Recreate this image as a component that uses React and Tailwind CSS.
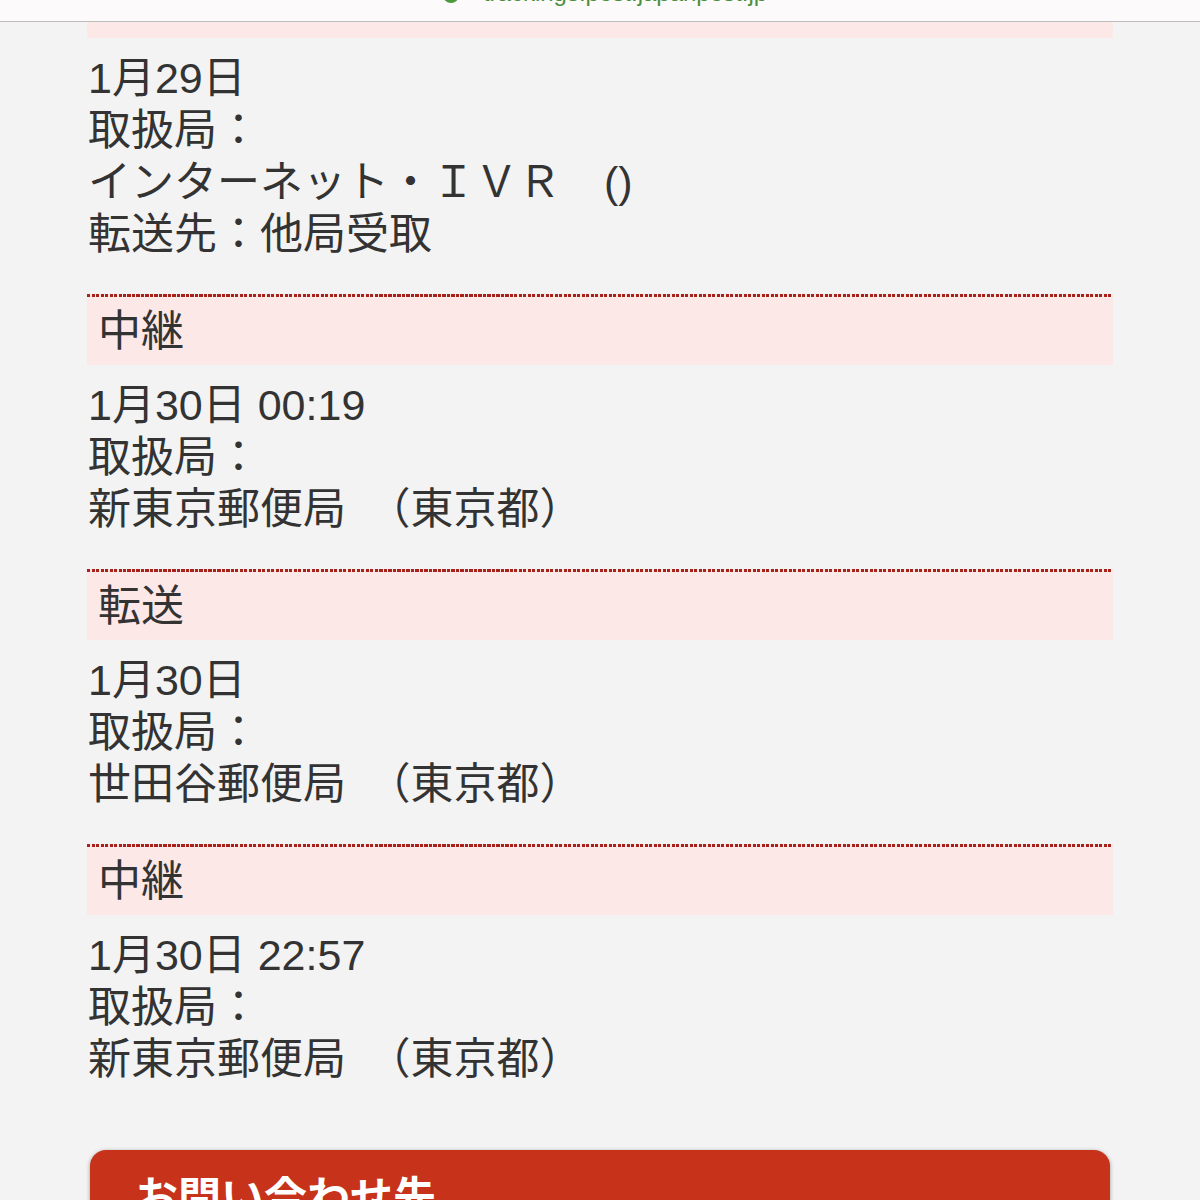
import React from 'react';

const font = { fontFamily: '"Liberation Sans", "Noto Sans CJK JP", sans-serif' };

const events = [
  { title: '中継', lines: ['1月30日 00:19', '取扱局：', '新東京郵便局　（東京都）'] },
  { title: '転送', lines: ['1月30日', '取扱局：', '世田谷郵便局　（東京都）'] },
  { title: '中継', lines: ['1月30日 22:57', '取扱局：', '新東京郵便局　（東京都）'] },
];

const Lines = ({ lines }) => (
  <div className="pt-[14px] pb-[34px] text-[43px] leading-[52px] text-[#333333] pl-[1px]">
    {lines.map((l, i) => (
      <div key={i} className="whitespace-pre">{l}</div>
    ))}
  </div>
);

export default function App() {
  return (
    <div className="w-[1200px] h-[1200px] bg-[#f3f3f3] overflow-hidden" style={font}>
      {/* browser address bar, mostly scrolled away */}
      <div className="h-[22px] bg-[#fcfafa] border-b border-[#bdbdbd] overflow-hidden flex justify-center">
        <div className="flex items-end gap-[24px] h-[24px] mt-[-19px] pl-[10px] text-[24px] leading-none text-[#4a8f3c]">
          <span className="inline-block w-[16px] h-[16px] rounded-full bg-[#4a9a3a] mb-[2px]"></span>
          <span>trackings.post.japanpost.jp</span>
        </div>
      </div>

      <div className="ml-[87px] w-[1026px]">
        <div className="h-[16px] bg-[#fde8e8]"></div>
        <Lines lines={['1月29日', '取扱局：', 'インターネット・ＩＶＲ　()', '転送先：他局受取']} />

        {events.map((e, i) => (
          <div key={i}>
            <div className="h-[3px] bg-[#fde8e8] bg-[repeating-linear-gradient(90deg,#a8221c_0px,#a8221c_3px,transparent_3px,transparent_4.5px)]"></div>
            <div className="h-[68px] bg-[#fde8e8] pl-[11px] flex items-center text-[43px] text-[#333333]">
              {e.title}
            </div>
            <Lines lines={e.lines} />
          </div>
        ))}

        <div className="mt-[31px] ml-[3px] w-[1020px] h-[120px] rounded-[16px] bg-[#c7321a] shadow-[0_1px_4px_rgba(0,0,0,0.35)] pl-[45px] pt-[22px] text-white font-bold text-[43px] leading-[52px]">
          お問い合わせ先
        </div>
      </div>
    </div>
  );
}
